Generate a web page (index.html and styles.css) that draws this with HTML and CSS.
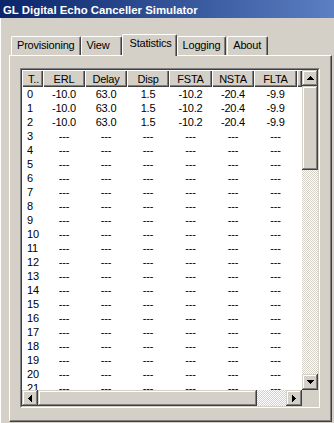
FILE: index.html
```html
<!DOCTYPE html>
<html lang="en">
<head>
  <meta charset="UTF-8" />
  <title>GL Digital Echo Canceller Simulator</title>
  <link rel="stylesheet" href="styles.css">
</head>
<body>

  <div class="window">
    <div class="titlebar">GL Digital Echo Canceller Simulator</div>

    <div class="client">
      <div class="tabs">
        <div class="tab">Provisioning</div>
        <div class="tab">View</div>
        <div class="tab active">Statistics</div>
        <div class="tab">Logging</div>
        <div class="tab">About</div>
      </div>

      <div class="panel">
        <div class="listview">
          <div class="list-inner">
            <div class="list-area">
              <table class="stats">
                <colgroup>
                  <col class="c-t"><col class="c42"><col class="c42"><col class="c42">
                  <col class="c43"><col class="c42"><col class="c43"><col class="c-fill">
                </colgroup>
                <thead>
                  <tr>
                    <th class="first">T..</th>
                    <th>ERL</th>
                    <th>Delay</th>
                    <th>Disp</th>
                    <th>FSTA</th>
                    <th>NSTA</th>
                    <th>FLTA</th>
                    <th></th>
                  </tr>
                </thead>
                <tbody id="rows"></tbody>
              </table>
            </div>

            <div class="vscroll">
              <div class="sbtn">
                <svg width="7" height="4" viewBox="0 0 7 4"><path d="M3 0h1v1h1v1h1v1h1v1H0V3h1V2h1V1h1z"/></svg>
              </div>
              <div class="thumb v"></div>
              <div class="track"></div>
              <div class="sbtn">
                <svg width="7" height="4" viewBox="0 0 7 4"><path d="M0 0h7v1H6v1H5v1H4v1H3V3H2V2H1V1H0z"/></svg>
              </div>
            </div>

            <div class="hscroll">
              <div class="sbtn">
                <svg width="4" height="7" viewBox="0 0 4 7"><path d="M3 0h1v7H3V6H2V5H1V4H0V3h1V2h1V1h1z"/></svg>
              </div>
              <div class="thumb h"></div>
              <div class="track"></div>
              <div class="sbtn">
                <svg width="4" height="7" viewBox="0 0 4 7"><path d="M0 0h1v1h1v1h1v1h1v1H3v1H2v1H1v1H0z"/></svg>
              </div>
            </div>

            <div class="corner"></div>
          </div>
        </div>
      </div>
    </div>
  </div>

<script>
  const stats = [
    ['-10.0', '63.0', '1.5', '-10.2', '-20.4', '-9.9'],
    ['-10.0', '63.0', '1.5', '-10.2', '-20.4', '-9.9'],
    ['-10.0', '63.0', '1.5', '-10.2', '-20.4', '-9.9']
  ];

  const rows = document.getElementById('rows');
  let html = '';
  for (let i = 0; i < 22; i++) {
    const vals = stats[i] || ['---', '---', '---', '---', '---', '---'];
    html += '<tr><td class="first">' + i + '</td>';
    vals.forEach(v => { html += '<td>' + v + '</td>'; });
    html += '<td></td></tr>';
  }
  rows.innerHTML = html;
</script>
</body>
</html>
```

FILE: styles.css
```css
body {
  margin: 0;
  background: #d4d0c8;
  font-family: 'Liberation Sans', Arial, sans-serif;
  font-size: 11px;
  letter-spacing: -0.2px;
  color: #000;
}

.window {
  width: 334px;
  height: 423px;
  background: #d4d0c8;
  overflow: hidden;
}

.titlebar {
  height: 16px;
  padding: 2px 0 0 3px;
  line-height: 16px;
  background: linear-gradient(to right, #0a246a, #5b7fc2);
  color: #fff;
  font-weight: bold;
  font-size: 11.4px;
  letter-spacing: 0;
  white-space: nowrap;
}

.client {
  height: 405px;
  border-left: 1px solid #fff;
  padding-top: 17px;
  box-sizing: border-box;
}

/* tab strip */
.tabs {
  display: flex;
  align-items: flex-end;
  height: 20px;
  padding-left: 10px;
}

.tab {
  height: 16px;
  min-width: 29px;
  padding: 2px 5px 0 5px;
  line-height: 13px;
  border-top: 1px solid #fff;
  border-left: 1px solid #fff;
  border-right: 1px solid #404040;
  border-radius: 2px 2px 0 0;
  box-shadow: inset -1px 0 #808080;
  background: #d4d0c8;
  white-space: nowrap;
}

.tab.active {
  position: relative;
  z-index: 1;
  height: 19px;
  margin: 0 0 -1px;
  padding: 2px 4px 0 7px;
}

.tab:last-child {
  margin-left: 1px;
}

/* tab page */
.panel {
  margin-left: 8px;
  width: 323px;
  height: 367px;
  box-sizing: border-box;
  padding: 12px 0 0 10px;
  border-top: 1px solid #fff;
  border-left: 1px solid #fff;
  border-right: 1px solid #404040;
  border-bottom: 1px solid #404040;
  box-shadow: inset -1px -1px #808080;
}

.listview {
  width: 300px;
  height: 340px;
  box-sizing: border-box;
  border: 1px solid;
  border-color: #808080 #fff #fff #808080;
}

.list-inner {
  height: 100%;
  box-sizing: border-box;
  border: 1px solid;
  border-color: #404040 #d4d0c8 #d4d0c8 #404040;
  display: grid;
  grid-template-columns: 1fr 16px;
  grid-template-rows: 1fr 16px;
}

.list-area {
  background: #fff;
  overflow: hidden;
}

.stats {
  border-collapse: collapse;
  table-layout: fixed;
  width: 280px;
}

.c-t { width: 21px; }
.c42 { width: 42px; }
.c43 { width: 43px; }
.c-fill { width: 5px; }

.stats th {
  height: 17px;
  padding: 0;
  font-weight: normal;
  text-align: center;
  background: #d4d0c8;
  box-shadow: inset 1px 1px #fff, inset -1px -1px #404040, inset -2px -2px #808080;
  white-space: nowrap;
  overflow: hidden;
}

.stats td {
  height: 14px;
  padding: 0;
  line-height: 14px;
  text-align: center;
  white-space: nowrap;
}

.stats th.first {
  text-align: left;
  padding-left: 6px;
}

.stats td.first {
  text-align: left;
  padding-left: 5px;
}

/* scroll bars */
.vscroll {
  display: flex;
  flex-direction: column;
}

.hscroll {
  display: flex;
}

.sbtn,
.thumb {
  background: #d4d0c8;
  box-shadow: inset -1px -1px #404040, inset 1px 1px #d4d0c8, inset -2px -2px #808080, inset 2px 2px #fff;
}

.sbtn {
  width: 16px;
  height: 16px;
  flex: none;
  display: flex;
  align-items: center;
  justify-content: center;
}

.sbtn svg {
  display: block;
  fill: #000;
}

.thumb.v {
  height: 84px;
  flex: none;
}

.thumb.h {
  width: 219px;
  flex: none;
}

.track {
  flex: 1;
  background: repeating-conic-gradient(#fff 0 25%, #d4d0c8 0 50%) 0 0 / 2px 2px;
}

.corner {
  background: #d4d0c8;
}
```
